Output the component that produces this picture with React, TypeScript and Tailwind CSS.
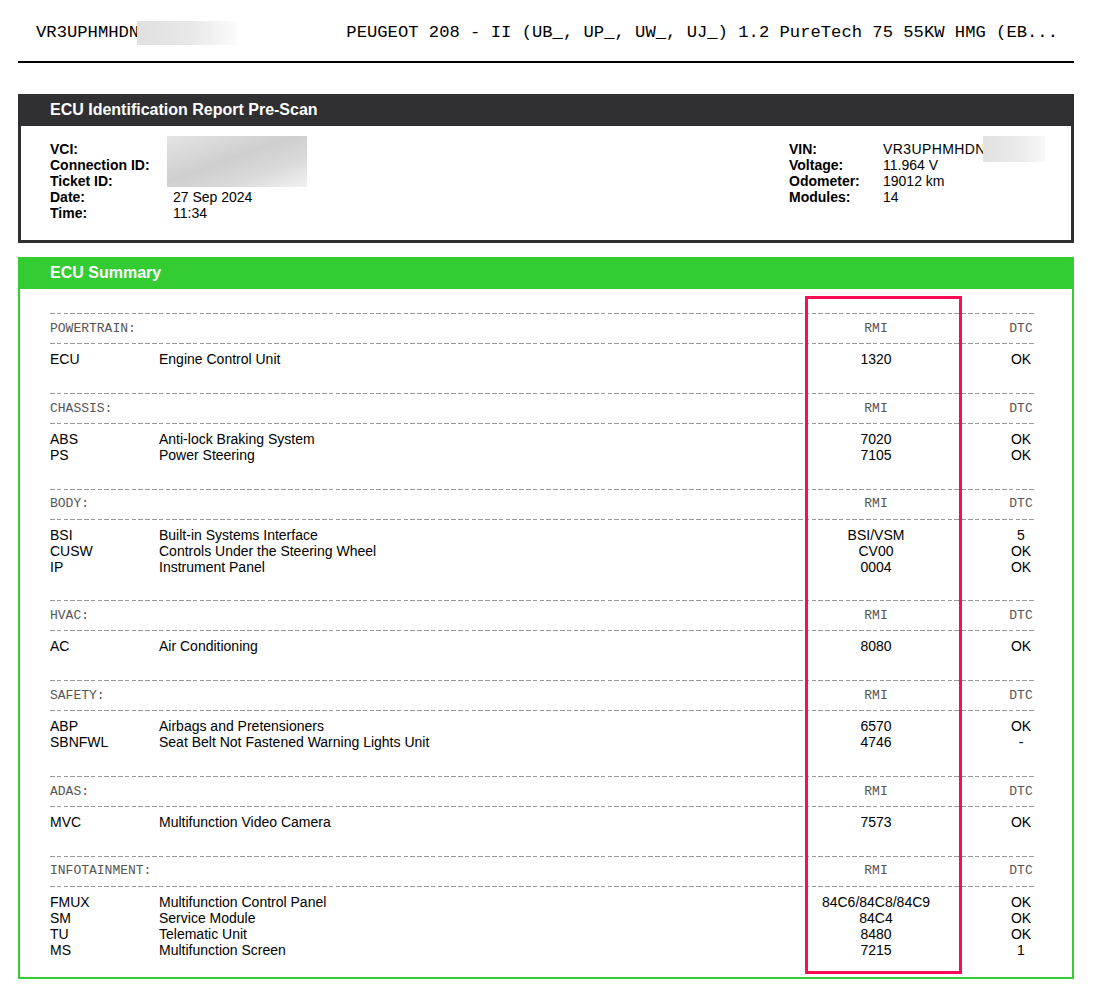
type EcuRow = {
  code: string;
  name: string;
  rmi: string;
  dtc: string;
};

type EcuSection = {
  label: string;
  rows: EcuRow[];
};

const SECTIONS: EcuSection[] = [
  {
    label: "POWERTRAIN:",
    rows: [{ code: "ECU", name: "Engine Control Unit", rmi: "1320", dtc: "OK" }],
  },
  {
    label: "CHASSIS:",
    rows: [
      { code: "ABS", name: "Anti-lock Braking System", rmi: "7020", dtc: "OK" },
      { code: "PS", name: "Power Steering", rmi: "7105", dtc: "OK" },
    ],
  },
  {
    label: "BODY:",
    rows: [
      { code: "BSI", name: "Built-in Systems Interface", rmi: "BSI/VSM", dtc: "5" },
      { code: "CUSW", name: "Controls Under the Steering Wheel", rmi: "CV00", dtc: "OK" },
      { code: "IP", name: "Instrument Panel", rmi: "0004", dtc: "OK" },
    ],
  },
  {
    label: "HVAC:",
    rows: [{ code: "AC", name: "Air Conditioning", rmi: "8080", dtc: "OK" }],
  },
  {
    label: "SAFETY:",
    rows: [
      { code: "ABP", name: "Airbags and Pretensioners", rmi: "6570", dtc: "OK" },
      { code: "SBNFWL", name: "Seat Belt Not Fastened Warning Lights Unit", rmi: "4746", dtc: "-" },
    ],
  },
  {
    label: "ADAS:",
    rows: [{ code: "MVC", name: "Multifunction Video Camera", rmi: "7573", dtc: "OK" }],
  },
  {
    label: "INFOTAINMENT:",
    rows: [
      { code: "FMUX", name: "Multifunction Control Panel", rmi: "84C6/84C8/84C9", dtc: "OK" },
      { code: "SM", name: "Service Module", rmi: "84C4", dtc: "OK" },
      { code: "TU", name: "Telematic Unit", rmi: "8480", dtc: "OK" },
      { code: "MS", name: "Multifunction Screen", rmi: "7215", dtc: "1" },
    ],
  },
];

const LEFT_INFO = [
  { label: "VCI:" },
  { label: "Connection ID:" },
  { label: "Ticket ID:" },
  { label: "Date:", value: "27 Sep 2024" },
  { label: "Time:", value: "11:34" },
];

const RIGHT_INFO = [
  { label: "Voltage:", value: "11.964 V" },
  { label: "Odometer:", value: "19012 km" },
  { label: "Modules:", value: "14" },
];

const sans = "font-['Liberation_Sans',Arial,sans-serif]";
const mono = "font-['Liberation_Mono','Courier_New',monospace]";

function DashedRule() {
  return (
    <div className="h-px w-full bg-[repeating-linear-gradient(90deg,#9a9a9a_0_4.5px,transparent_4.5px_6.8px)]" />
  );
}

function SectionBlock({ section, last }: { section: EcuSection; last: boolean }) {
  return (
    <div className={last ? "" : "mb-[25.75px]"}>
      <DashedRule />
      <div className={`flex h-[29px] items-center text-[13px] text-[#555] ${mono}`}>
        <div className="flex-1">{section.label}</div>
        <div className="w-[140px] text-center">RMI</div>
        <div className="w-[61px]" />
        <div className="w-[28px] text-center">DTC</div>
      </div>
      <DashedRule />
      <div className="pt-[7px]">
        {section.rows.map((row) => (
          <div key={row.code} className="flex h-[16px] items-center text-[14px] leading-[16px] text-black">
            <div className="w-[109px]">{row.code}</div>
            <div className="flex-1">{row.name}</div>
            <div className="w-[140px] text-center">{row.rmi}</div>
            <div className="w-[61px]" />
            <div className="w-[28px] text-center">{row.dtc}</div>
          </div>
        ))}
      </div>
    </div>
  );
}

export default function App() {
  return (
    <div className={`min-h-screen bg-white pt-[21px] ${sans}`}>
      <div className="ml-[18px] w-[1056px]">
        <div className={`flex h-[24px] items-center justify-between pl-[18px] pr-[16px] text-[17.2px] leading-[24px] text-black ${mono}`}>
          <div className="flex items-center">
            <span>VR3UPHMHDN</span>
            <span className="-ml-[2px] inline-block h-[24px] w-[100px] bg-[linear-gradient(90deg,#e0e0e0,#e9e9e9_55%,#fbfbfb)]" />
          </div>
          <span>PEUGEOT 208 - II (UB_, UP_, UW_, UJ_) 1.2 PureTech 75 55KW HMG (EB...</span>
        </div>
        <div className="mt-[16px] h-[2px] bg-black" />

        <section className="mt-[31px]">
          <div className="flex h-[32px] items-center bg-[#303033] pl-[32px] text-[16px] font-bold text-white">
            ECU Identification Report Pre-Scan
          </div>
          <div className="flex items-start border-x-[3px] border-b-[3px] border-[#303033] pb-[19px] pl-[29px] pt-[15px] text-[14px] leading-[16px] text-black">
            <div className="grid w-[739px] grid-cols-[123px_1fr] content-start">
              {LEFT_INFO.map((item, i) => (
                <div key={item.label} className="contents">
                  <div className="font-bold">{item.label}</div>
                  {i === 0 ? (
                    <div className="row-span-3">
                      <div className="-ml-[6px] -mt-[5px] h-[51px] w-[140px] bg-[linear-gradient(160deg,#e4e4e4,#cfcfcf_45%,#d9d9d9_70%,#f2f2f2)]" />
                    </div>
                  ) : i < 3 ? null : (
                    <div>{item.value}</div>
                  )}
                </div>
              ))}
            </div>
            <div className="grid grid-cols-[94px_1fr] content-start">
              <div className="font-bold">VIN:</div>
              <div className="flex h-[16px] items-center">
                <span className="tracking-[0.4px]">VR3UPHMHDN</span>
                <span className="-ml-[3px] inline-block h-[26px] w-[62px] shrink-0 bg-[linear-gradient(90deg,#e2e2e2,#ebebeb_60%,#f8f8f8)]" />
              </div>
              {RIGHT_INFO.map((item) => (
                <div key={item.label} className="contents">
                  <div className="font-bold">{item.label}</div>
                  <div>{item.value}</div>
                </div>
              ))}
            </div>
          </div>
        </section>

        <section className="relative mt-[14px]">
          <div className="flex h-[32px] items-center bg-[#33cc33] pl-[32px] text-[16px] font-bold text-white">
            ECU Summary
          </div>
          <div className="border-x-2 border-b-2 border-[#33cc33] pb-[19px] pl-[30px] pr-[37px] pt-[24px]">
            {SECTIONS.map((section, i) => (
              <SectionBlock key={section.label} section={section} last={i === SECTIONS.length - 1} />
            ))}
          </div>
          <div className="pointer-events-none absolute left-[787px] top-[39px] h-[678px] w-[157px] border-[3px] border-[#ff0a54]" />
        </section>
      </div>
    </div>
  );
}
